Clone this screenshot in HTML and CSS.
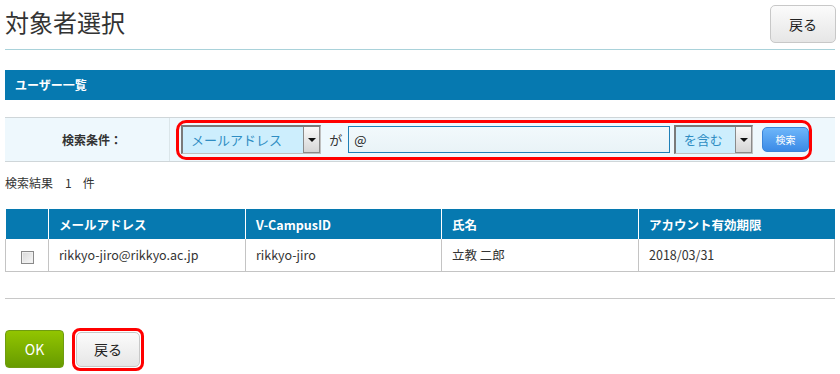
FILE: index.html
```html
<!DOCTYPE html>
<html lang="ja">
<head>
<meta charset="utf-8">
<link rel="stylesheet" href="styles.css">
</head>
<body>
<div class="page">
  <div class="head">
    <h1 class="title">対象者選択</h1>
    <button class="btn btn-back btn-top">戻る</button>
  </div>

  <div class="bar">ユーザー一覧</div>

  <div class="search">
    <div class="search-label">検索条件：</div>
    <div class="search-body">
      <div class="hl">
        <div class="sel sel-field"><span class="sel-text">メールアドレス</span><span class="sel-arrow"></span></div>
        <span class="ga">が</span>
        <div class="input">@</div>
        <div class="sel sel-op"><span class="sel-text">を含む</span><span class="sel-arrow"></span></div>
        <button class="btn-search">検索</button>
      </div>
    </div>
  </div>

  <div class="result"><span>検索結果</span><span class="num">1</span><span>件</span></div>

  <table class="grid">
    <thead>
      <tr>
        <th class="c0"></th>
        <th class="c1">メールアドレス</th>
        <th class="c2">V-CampusID</th>
        <th class="c3">氏名</th>
        <th class="c4">アカウント有効期限</th>
      </tr>
    </thead>
    <tbody>
      <tr>
        <td class="c0"><span class="cb"></span></td>
        <td>rikkyo-jiro@rikkyo.ac.jp</td>
        <td>rikkyo-jiro</td>
        <td>立教 二郎</td>
        <td>2018/03/31</td>
      </tr>
    </tbody>
  </table>

  <div class="rule"></div>

  <div class="actions">
    <button class="btn btn-ok">OK</button>
    <div class="hl2"><button class="btn btn-back btn-bottom">戻る</button></div>
  </div>
</div>
</body>
</html>
```

FILE: styles.css
```css
* { box-sizing: border-box; }
html, body { margin: 0; padding: 0; background: #fff; }
body {
  font-family: "Noto Sans CJK JP", "DejaVu Sans", sans-serif;
  color: #333;
  font-size: 12px;
}
.page { padding: 0 5px; width: 840px; }

.head {
  display: flex;
  justify-content: space-between;
  align-items: flex-start;
  height: 50px;
  border-bottom: 1px solid #a9d2da;
}
.title {
  margin: 6px 0 0 0;
  font-size: 24px;
  font-weight: normal;
  line-height: 32px;
  color: #333;
}
.btn {
  font-family: "Noto Sans CJK JP", sans-serif;
  cursor: pointer;
  padding: 0;
}
.btn-back {
  border: 1px solid #c8c8c8;
  border-radius: 5px;
  background: linear-gradient(#fbfbfb, #e6e6e6);
  color: #222;
  font-size: 14px;
}
.btn-top {
  width: 66px;
  height: 38px;
  margin-top: 5px;
  margin-right: -1px;
}

.bar {
  margin-top: 20px;
  height: 30px;
  background: #0679b0;
  color: #fff;
  font-weight: bold;
  font-size: 12px;
  line-height: 30px;
  padding-left: 10px;
}

.search {
  margin-top: 17px;
  display: flex;
  height: 45px;
  border-top: 1px solid #cfd6d9;
  border-bottom: 1px solid #cfd6d9;
  background: #eef8fd;
}
.search-label {
  width: 165px;
  border-right: 1px solid #dbe6ea;
  display: flex;
  align-items: center;
  justify-content: center;
  padding-left: 10px;
  font-weight: bold;
  font-size: 12px;
  color: #333;
}
.search-body {
  flex: 1;
  display: flex;
  align-items: center;
  padding-left: 6px;
}
.hl {
  display: flex;
  align-items: center;
  width: 636px;
  height: 40px;
  border: 3px solid #ff0000;
  border-radius: 10px;
  padding-left: 2px;
}
.sel {
  display: flex;
  height: 29px;
  background: #cdeefd;
  border-top: 2px solid #7a7a7a;
  border-left: 2px solid #7a7a7a;
  border-bottom: 1px solid #c0c0c0;
  border-right: 1px solid #c0c0c0;
}
.sel-text {
  flex: 1;
  color: #2f8dc3;
  font-size: 13px;
  line-height: 26px;
  padding-left: 8px;
}
.sel-arrow {
  width: 17px;
  background: linear-gradient(#fafafa, #d5d5d5);
  border-left: 1px solid #8a8a8a;
  border-right: 1px solid #8a8a8a;
  border-bottom: 1px solid #8a8a8a;
  position: relative;
}
.sel-arrow::after {
  content: "";
  position: absolute;
  left: 4px;
  top: 11px;
  border-left: 4px solid transparent;
  border-right: 4px solid transparent;
  border-top: 4px solid #111;
}
.sel-field { width: 141px; }
.sel-op { width: 80px; margin-left: 4px; }
.ga {
  margin: 0 6px 0 8px;
  font-size: 13px;
  color: #333;
}
.input {
  width: 323px;
  height: 27px;
  border: 1px solid #1f80b8;
  background: linear-gradient(#f2f9fc, #e9f3f7);
  font-size: 13px;
  line-height: 25px;
  padding-left: 5px;
  color: #222;
}
.btn-search {
  margin-left: 9px;
  width: 47px;
  height: 25px;
  border: 1px solid #3b84d8;
  border-radius: 5px;
  background: linear-gradient(#6db6fa, #3b8ae6);
  color: #fff;
  font-size: 10px;
  font-family: "Noto Sans CJK JP", sans-serif;
  padding: 0;
}

.result {
  margin-top: 13px;
  display: flex;
  font-size: 12px;
  line-height: 16px;
  color: #333;
}
.result .num { margin: 0 11px 0 12px; }

.grid {
  margin-top: 18px;
  width: 830px;
  border-collapse: collapse;
  table-layout: fixed;
}
.grid th {
  background: #0679b0;
  color: #fff;
  font-weight: bold;
  font-size: 12.5px;
  height: 30px;
  text-align: left;
  padding: 0 0 0 10px;
  border-left: 1px solid #fff;
}
.grid th:first-child { border-left: none; }
.grid td {
  height: 32px;
  padding: 0 0 0 10px;
  font-size: 12.5px;
  color: #333;
  border: 1px solid #c4c4c4;
  border-top: none;
}
.grid .c0 { width: 43px; }
.grid .c1 { width: 197px; }
.grid .c2 { width: 196px; }
.grid .c3 { width: 197px; }
.grid td.c0 { padding: 0; text-align: center; }
.cb {
  display: inline-block;
  width: 13px;
  height: 13px;
  border: 1px solid #8a8a8a;
  background: linear-gradient(135deg, #d8d8d8, #f8f8f8);
  box-shadow: inset 0 0 0 1px #f0f0f0;
  vertical-align: middle;
  margin-top: 2px;
}

.rule {
  margin-top: 26px;
  border-top: 1px solid #c8c8c8;
  width: 830px;
}

.actions {
  display: flex;
  align-items: center;
  margin-top: 29px;
  gap: 8px;
}
.btn-ok {
  width: 59px;
  height: 38px;
  border: 1px solid #6f9c10;
  border-radius: 4px;
  background: linear-gradient(#92c500, #679b00);
  color: #fff;
  font-size: 14px;
}
.hl2 {
  border: 3px solid #ff0000;
  border-radius: 8px;
  padding: 1px;
}
.btn-bottom {
  width: 64px;
  height: 35px;
  display: block;
}
```
